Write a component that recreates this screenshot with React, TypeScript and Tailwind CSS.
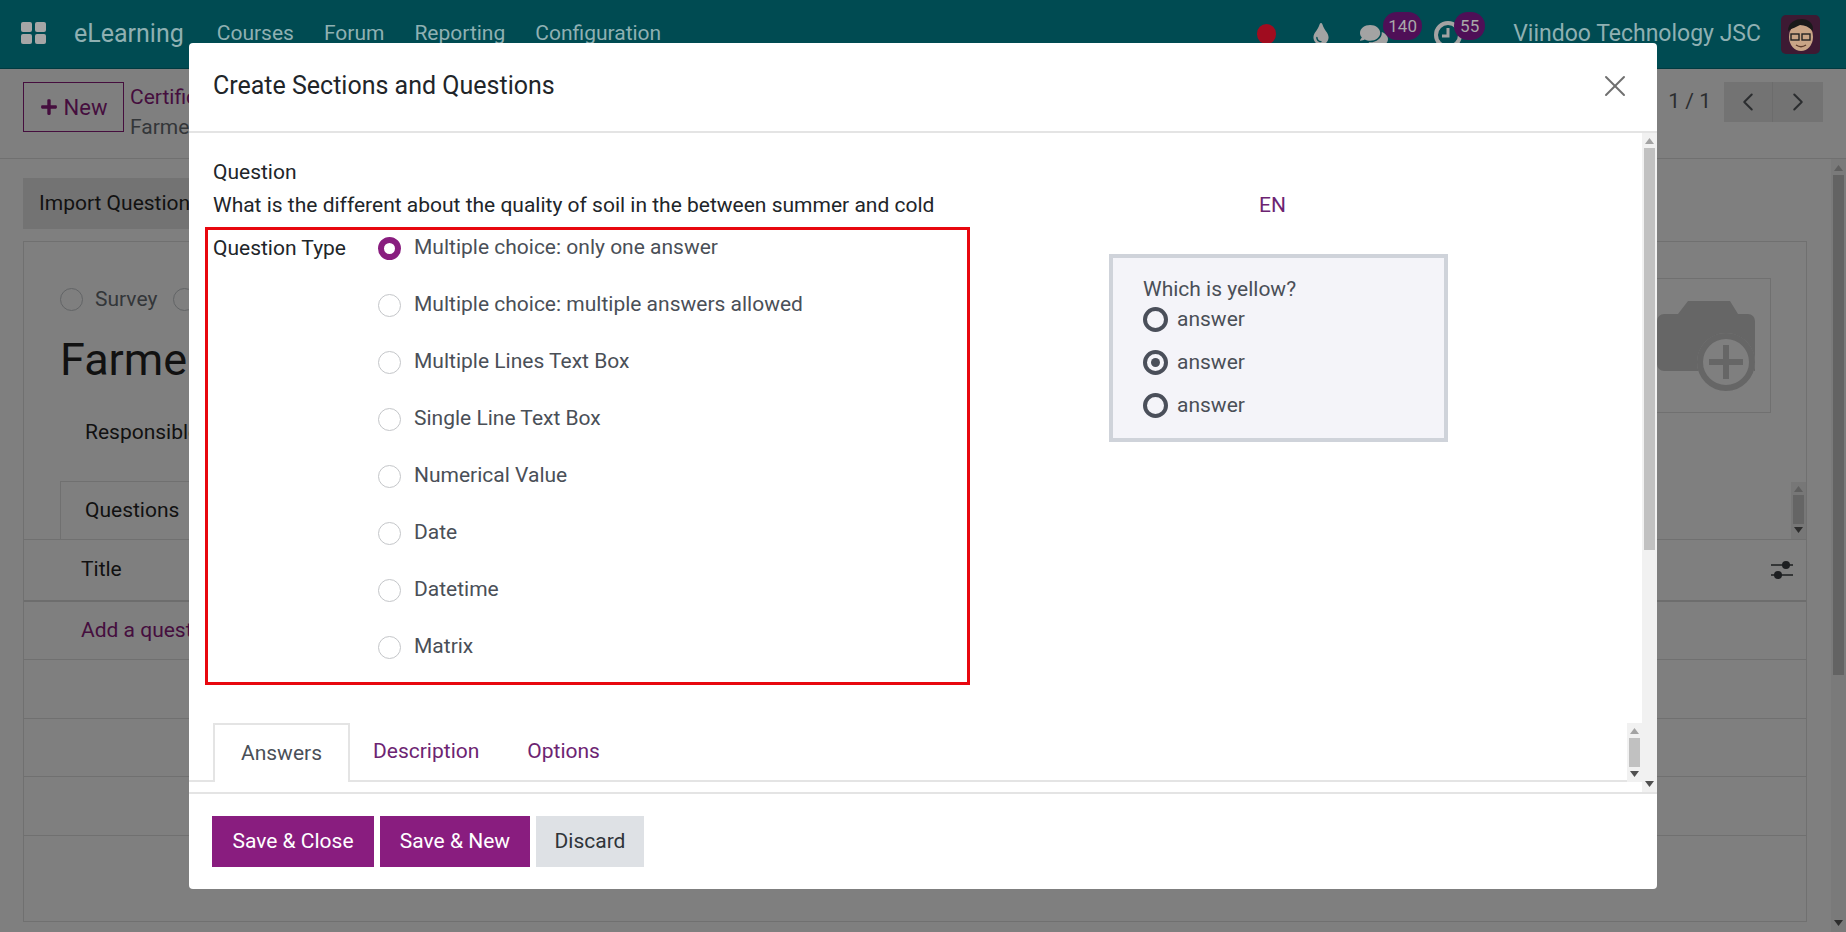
import { FaComments, FaPlus, FaTint } from "react-icons/fa";
import { ChevronLeft, ChevronRight, X } from "lucide-react";

const questionTypes = [
  "Multiple choice: only one answer",
  "Multiple choice: multiple answers allowed",
  "Multiple Lines Text Box",
  "Single Line Text Box",
  "Numerical Value",
  "Date",
  "Datetime",
  "Matrix",
];

const Arrow = ({ down, className }: { down?: boolean; className: string }) => (
  <svg width="9" height="6" viewBox="0 0 9 6" className={className}>
    <path d={down ? "M0 0h9L4.5 6z" : "M0 6h9L4.5 0z"} fill="currentColor" />
  </svg>
);

const Radio = ({ checked }: { checked?: boolean }) =>
  checked ? (
    <span className="w-[23px] h-[23px] rounded-full border-[6px] border-[#891d7f] bg-white shrink-0" />
  ) : (
    <span className="w-[23px] h-[23px] rounded-full border border-[#c4c6c9] bg-white shrink-0" />
  );

const NavBar = () => (
  <div className="h-[69px] bg-[#004b52] flex items-center pl-[21px] text-[#8fb0b2] shrink-0 border-b border-[#003a40]">
    <svg width="25" height="22" viewBox="0 0 25 22" className="mb-[2px]">
      <rect x="0" y="0" width="11" height="10" rx="2" fill="#a6a6a6" />
      <rect x="14" y="0" width="11" height="10" rx="2" fill="#a6a6a6" />
      <rect x="0" y="12" width="11" height="10" rx="2" fill="#a6a6a6" />
      <rect x="14" y="12" width="11" height="10" rx="2" fill="#a6a6a6" />
    </svg>
    <span className="ml-[28px] text-[25px]">eLearning</span>
    <div className="ml-[33px] flex gap-[30px] text-[21px]">
      <span>Courses</span>
      <span>Forum</span>
      <span>Reporting</span>
      <span>Configuration</span>
    </div>
    <div className="ml-auto flex items-center h-full">
      <span className="w-[19px] h-[20px] rounded-full bg-[#a00c1f] mr-[34px]" />
      <FaTint className="text-[#a3a3a3] text-[22px] mr-[26px]" />
      <div className="relative w-[64px] h-full">
        <FaComments className="absolute left-[2px] top-[22px] text-[#a3a3a3] text-[28px]" />
        <span className="absolute left-[25px] top-[12px] w-[39px] h-[28px] rounded-full bg-[#4f0f57] text-[17px] leading-[28px] text-center text-[#a9a9a9]">140</span>
      </div>
      <div className="relative w-[68px] h-full ml-[1px]">
        <svg width="30" height="30" viewBox="0 0 30 30" className="absolute left-[10px] top-[20px] text-[#a3a3a3]">
          <circle cx="15" cy="15" r="12" fill="none" stroke="currentColor" strokeWidth="4" />
          <path d="M15 8v8h-6" fill="none" stroke="currentColor" strokeWidth="3" />
        </svg>
        <span className="absolute left-[31px] top-[12px] w-[31px] h-[28px] rounded-full bg-[#4f0f57] text-[17px] leading-[28px] text-center text-[#a9a9a9]">55</span>
      </div>
      <span className="text-[23px] ml-[22px]">Viindoo Technology JSC</span>
      <svg width="39" height="39" viewBox="0 0 39 39" className="ml-[20px] mr-[26px] rounded-[5px]">
        <rect width="39" height="39" fill="#3d1a33" />
        <ellipse cx="20" cy="22" rx="12" ry="14" fill="#c9a586" />
        <path d="M7 16c0-9 8-12 14-12s12 4 11 12c-4-4-8-6-13-6-3 2-8 3-12 6z" fill="#1a1a1a" />
        <rect x="10" y="19" width="8" height="6" fill="none" stroke="#222" strokeWidth="1.4" />
        <rect x="21" y="19" width="8" height="6" fill="none" stroke="#222" strokeWidth="1.4" />
        <path d="M15 30c3 2 7 2 10 0" fill="none" stroke="#5b3a2a" strokeWidth="1.4" />
      </svg>
    </div>
  </div>
);

const ControlPanel = () => (
  <div className="h-[90px] border-b border-[#707070] flex items-start pl-[23px] pr-[23px] pt-[13px] shrink-0">
    <button className="w-[101px] h-[50px] border border-[#450e3e] flex items-center justify-center gap-[6px] text-[#450e3e] text-[22px]">
      <FaPlus className="text-[18px]" /> New
    </button>
    <div className="ml-[6px] leading-[30px] text-[21px]">
      <div className="text-[#450e3e]">Certifications</div>
      <div className="text-[#333639]">Farmer</div>
    </div>
    <div className="ml-auto flex items-center text-[#2b2d2f]">
      <span className="text-[21px] mr-[13px]">1 / 1</span>
      <span className="w-[49px] h-[40px] bg-[#737373] flex items-center justify-center border-r border-[#6c6c6c]">
        <ChevronLeft size={30} strokeWidth={1.6} />
      </span>
      <span className="w-[50px] h-[40px] bg-[#737373] flex items-center justify-center">
        <ChevronRight size={30} strokeWidth={1.6} />
      </span>
    </div>
  </div>
);

const Sheet = () => (
  <div className="mt-[12px] h-[681px] border border-[#707070] flex flex-col">
    <div className="h-[240px] flex shrink-0">
      <div className="flex-1 pl-[36px]">
        <div className="mt-[42px] flex items-center text-[21px] text-[#333639]">
          <span className="w-[23px] h-[23px] rounded-full border border-[#626466] mr-[12px]" />
          Survey
          <span className="w-[23px] h-[23px] rounded-full border border-[#626466] ml-[16px]" />
        </div>
        <div className="mt-[16px] text-[45px] leading-[56px] text-[#111]">Farmer</div>
        <div className="mt-[29px] ml-[25px] text-[21px] text-[#111]">Responsible</div>
      </div>
      <div className="mt-[36px] mr-[35px] w-[200px] h-[135px] border border-[#707070] flex items-center justify-end pr-[15px]">
        <svg width="98" height="90" viewBox="0 0 98 90" className="text-[#666]">
          <path d="M21 13L31 0h42l8 13h10a7 7 0 0 1 7 7v50H7a7 7 0 0 1-7-7V20a7 7 0 0 1 7-7z" fill="currentColor" />
          <circle cx="69" cy="61" r="29" fill="#7f7f7f" />
          <circle cx="69" cy="61" r="26" fill="none" stroke="currentColor" strokeWidth="6" />
          <path d="M69 44v34M52 61h34" stroke="currentColor" strokeWidth="6" />
        </svg>
      </div>
    </div>
    <div className="h-[58px] flex items-end border-b border-[#707070] shrink-0 relative">
      <span className="ml-[36px] w-[140px] h-[58px] border border-b-0 border-[#707070] text-[21px] leading-[56px] pl-[24px] text-[#111] bg-[#7f7f7f]">Questions</span>
      <div className="ml-auto w-[15px] h-[57px] bg-[#777] flex flex-col items-center text-[#5f5f5f] py-[4px]">
        <Arrow className="mb-[3px]" />
        <span className="w-[11px] h-[29px] bg-[#656565]" />
        <Arrow down className="mt-[3px] text-[#2d2d2d]" />
      </div>
    </div>
    <div className="h-[62px] border-b-[2px] border-[#6d6d6d] flex items-center pl-[57px] pr-[13px] text-[21px] text-[#111] shrink-0">
      Title
      <svg width="22" height="18" viewBox="0 0 22 18" className="ml-auto text-[#1d1f21]">
        <path d="M0 4h22M0 14h22" stroke="currentColor" strokeWidth="1.5" />
        <ellipse cx="15" cy="4" rx="4" ry="4" fill="currentColor" />
        <ellipse cx="7" cy="14" rx="4" ry="4" fill="currentColor" />
      </svg>
    </div>
    <div className="h-[58px] border-b border-[#707070] flex items-center pl-[57px] text-[21px] text-[#450e3e] shrink-0">Add a question</div>
    <div className="h-[59px] border-b border-[#707070] shrink-0" />
    <div className="h-[58px] border-b border-[#707070] shrink-0" />
    <div className="h-[59px] border-b border-[#707070] shrink-0" />
  </div>
);

const Modal = () => (
  <div className="absolute left-[189px] top-[43px] w-[1468px] h-[846px] bg-white rounded-[4px] flex flex-col overflow-hidden">
    <div className="h-[90px] border-b-[2px] border-[#e4e4e4] flex items-center pl-[24px] pr-[24px] pb-[2px] shrink-0">
      <h2 className="text-[25px] text-[#212529] font-normal">Create Sections and Questions</h2>
      <X size={36} strokeWidth={1.3} className="ml-auto text-[#6f6f6f]" />
    </div>
    <div className="flex-1 flex min-h-0">
      <div className="flex-1 flex flex-col min-w-0">
        <div className="flex-1 flex pl-[16px] min-h-0">
          <div className="w-[765px] shrink-0">
            <div className="pt-[23px] pl-[8px] text-[21px] leading-[33px] text-[#212529] whitespace-nowrap">
              <div>Question</div>
              <div>What is the different about the quality of soil in the between summer and cold</div>
            </div>
            <div className="mt-[5px] border-[3px] border-[#e8070f] pl-[5px] pt-[4px] h-[458px] flex text-[21px]">
              <div className="w-[165px] leading-[28px] text-[#212529] shrink-0">Question Type</div>
              <div className="flex flex-col gap-[29px]">
                {questionTypes.map((label, i) => (
                  <div key={label} className="flex items-center gap-[13px] h-[28px] text-[#4a4f57]">
                    <Radio checked={i === 0} />
                    {label}
                  </div>
                ))}
              </div>
            </div>
          </div>
          <div className="flex-1 pt-[56px]">
            <div className="ml-[289px] text-[21px] leading-[33px] text-[#6d2472]">EN</div>
            <div className="ml-[139px] mt-[32px] w-[339px] h-[188px] border-[4px] border-[#cfd3da] bg-[#f4f4f9] pl-[30px] pt-[17px] text-[21px] text-[#4a4f57]">
              <div className="leading-[28px]">Which is yellow?</div>
              <div className="flex flex-col gap-[18px] mt-[4px]">
                {[false, true, false].map((on, i) => (
                  <div key={i} className="flex items-center gap-[9px] h-[25px]">
                    <span className="w-[25px] h-[25px] rounded-full border-[4px] border-[#4a4f5a] flex items-center justify-center shrink-0">
                      {on && <span className="w-[9px] h-[9px] rounded-full bg-[#4a4f5a]" />}
                    </span>
                    answer
                  </div>
                ))}
              </div>
            </div>
          </div>
        </div>
        <div className="h-[59px] flex items-stretch shrink-0 mb-[10px]">
          <div className="flex-1 flex items-end pl-[24px] border-b-[2px] border-[#e4e4e4] text-[21px]">
            <span className="w-[137px] h-[59px] -mb-[2px] border-[2px] border-b-0 border-[#e4e4e4] bg-white flex items-center justify-center text-[#4a4f57]">Answers</span>
            <span className="h-[57px] flex items-center ml-[23px] text-[#6d2472]">Description</span>
            <span className="h-[57px] flex items-center ml-[48px] text-[#6d2472]">Options</span>
          </div>
          <div className="w-[15px] bg-[#f1f1f1] flex flex-col items-center py-[5px] text-[#a3a3a3]">
            <Arrow className="mb-[4px]" />
            <span className="w-[11px] h-[29px] bg-[#c1c1c1]" />
            <Arrow down className="mt-[4px] text-[#505050]" />
          </div>
        </div>
      </div>
      <div className="w-[15px] bg-[#f1f1f1] flex flex-col items-center pt-[5px] pb-[5px] text-[#a3a3a3] shrink-0">
        <Arrow className="mb-[4px]" />
        <span className="w-[11px] h-[402px] bg-[#c1c1c1]" />
        <Arrow down className="mt-auto text-[#505050]" />
      </div>
    </div>
    <div className="h-[97px] border-t-[2px] border-[#e4e4e4] flex items-start pl-[23px] pt-[22px] gap-[6px] text-[21px] shrink-0">
      <button className="w-[162px] h-[51px] bg-[#891d7f] text-white">Save &amp; Close</button>
      <button className="w-[150px] h-[51px] bg-[#891d7f] text-white">Save &amp; New</button>
      <button className="w-[108px] h-[51px] bg-[#dee1e5] text-[#2f3439]">Discard</button>
    </div>
  </div>
);

export default function App() {
  return (
    <div className="relative w-[1846px] h-[932px] overflow-hidden bg-[#7f7f7f] flex flex-col font-['Roboto',sans-serif]">
      <NavBar />
      <ControlPanel />
      <div className="flex-1 flex min-h-0">
        <div className="flex-1 pl-[23px] pr-[24px] pt-[19px] min-w-0">
          <button className="h-[51px] w-[200px] bg-[#737373] text-left pl-[16px] text-[21px] text-[#111]">Import Questions</button>
          <Sheet />
        </div>
        <div className="w-[15px] bg-[#7a7a7a] flex flex-col items-center py-[6px] text-[#5f5f5f] shrink-0">
          <Arrow className="mb-[4px]" />
          <span className="w-[11px] h-[500px] bg-[#636363]" />
          <Arrow down className="mt-auto text-[#2d2d2d]" />
        </div>
      </div>
      <Modal />
    </div>
  );
}
